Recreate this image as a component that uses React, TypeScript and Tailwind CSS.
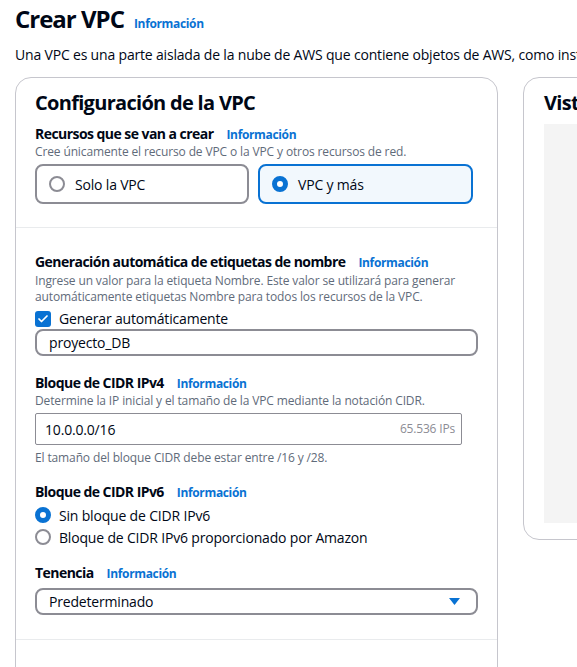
import { Check } from "lucide-react";

const Info = ({ className = "" }: { className?: string }) => (
    <span className={`text-[12px] font-bold tracking-[-0.35px] text-[#0972d3] ${className}`}>Información</span>
);

const Radio = ({ checked }: { checked?: boolean }) =>
    checked ? (
        <span className="w-[16px] h-[16px] rounded-full border-[5px] border-[#0972d3] bg-white shrink-0" />
    ) : (
        <span className="w-[16px] h-[16px] rounded-full border-2 border-[#8c8c94] bg-white shrink-0" />
    );

const Label = ({ children }: { children: React.ReactNode }) => (
    <div className="flex items-baseline gap-[13px] text-[14px] font-bold tracking-[-0.55px] text-[#000716] leading-[18px]">
        <span>{children}</span>
        <Info />
    </div>
);

const Desc = ({ children, className = "" }: { children: React.ReactNode; className?: string }) => (
    <p className={`text-[12px] text-[#5f6b7a] leading-[16px] tracking-[-0.13px] ${className}`}>{children}</p>
);

export default function App() {
    return (
        <div
            className="w-[577px] h-[667px] overflow-hidden bg-white text-[#000716] tracking-[-0.18px]"
            style={{ fontFamily: '"Open Sans", "Noto Sans", sans-serif' }}
        >
            <div className="pl-[15px] pt-[2px]">
                <div className="flex items-baseline gap-[10px]">
                    <h1 className="text-[24px] font-bold tracking-[-1px] leading-[34px]">Crear VPC</h1>
                    <Info />
                </div>
                <p className="mt-[9px] text-[14px] leading-[20px] whitespace-nowrap">
                    Una VPC es una parte aislada de la nube de AWS que contiene objetos de AWS, como instancias de Amazon EC2.
                </p>

                <div className="mt-[12px] flex gap-[25px] items-start">
                    <div className="w-[483px] shrink-0 border border-[#c6c6cd] rounded-[16px]">
                        <div className="px-[19px] pt-[12px] pb-[23px]">
                            <h2 className="text-[20px] font-bold tracking-[-0.7px] leading-[26px]">Configuración de la VPC</h2>
                            <div className="mt-[9px]">
                                <Label>Recursos que se van a crear</Label>
                                <Desc>Cree únicamente el recurso de VPC o la VPC y otros recursos de red.</Desc>
                            </div>
                            <div className="mt-[4px] flex gap-[9px]">
                                <div className="w-[214px] h-[40px] flex items-center gap-[10px] px-[12px] border-2 border-[#8c8c94] rounded-[8px]">
                                    <Radio />
                                    <span className="text-[14px]">Solo la VPC</span>
                                </div>
                                <div className="w-[215px] h-[40px] flex items-center gap-[10px] px-[12px] border-2 border-[#0972d3] bg-[#f2f8fd] rounded-[8px]">
                                    <Radio checked />
                                    <span className="text-[14px]">VPC y más</span>
                                </div>
                            </div>
                        </div>

                        <div className="border-t border-[#e9ebed] px-[19px] pt-[25px] pb-[24px]">
                            <Label>Generación automática de etiquetas de nombre</Label>
                            <Desc className="mt-[1px] w-[430px]">
                                Ingrese un valor para la etiqueta Nombre. Este valor se utilizará para generar automáticamente etiquetas Nombre para todos los recursos de la VPC.
                            </Desc>
                            <div className="mt-[4px] flex items-center gap-[8px] h-[20px]">
                                <span className="w-[16px] h-[16px] rounded-[3px] bg-[#0972d3] flex items-center justify-center">
                                    <Check className="w-[12px] h-[12px] text-white" strokeWidth={3.5} />
                                </span>
                                <span className="text-[14px] leading-[20px]">Generar automáticamente</span>
                            </div>
                            <div className="w-[443px] h-[27px] border-2 border-[#8c8c94] rounded-[8px] flex items-center px-[12px] text-[14px]">
                                proyecto_DB
                            </div>

                            <div className="mt-[18px]">
                                <Label>Bloque de CIDR IPv4</Label>
                                <Desc>Determine la IP inicial y el tamaño de la VPC mediante la notación CIDR.</Desc>
                            </div>
                            <div className="mt-[4px] w-[427px] h-[32px] border border-[#8c8c94] rounded-[2px] flex items-center justify-between pl-[9px] pr-[6px]">
                                <span className="text-[14px]">10.0.0.0/16</span>
                                <span className="text-[12px] text-[#8c8c94]">65.536 IPs</span>
                            </div>
                            <Desc className="mt-[5px]">El tamaño del bloque CIDR debe estar entre /16 y /28.</Desc>

                            <div className="mt-[17px]">
                                <Label>Bloque de CIDR IPv6</Label>
                            </div>
                            <div className="mt-[3px] flex flex-col gap-[2px]">
                                <div className="flex items-center gap-[8px] h-[20px]">
                                    <Radio checked />
                                    <span className="text-[14px]">Sin bloque de CIDR IPv6</span>
                                </div>
                                <div className="flex items-center gap-[8px] h-[20px]">
                                    <Radio />
                                    <span className="text-[14px]">Bloque de CIDR IPv6 proporcionado por Amazon</span>
                                </div>
                            </div>

                            <div className="mt-[17px]">
                                <Label>Tenencia</Label>
                            </div>
                            <div className="mt-[5px] w-[443px] h-[27px] border-2 border-[#8c8c94] rounded-[8px] flex items-center justify-between pl-[12px] pr-[16px] text-[14px]">
                                <span>Predeterminado</span>
                                <svg width="11" height="7" viewBox="0 0 11 7">
                                    <path d="M0 0 H11 L5.5 7 Z" fill="#0972d3" />
                                </svg>
                            </div>
                        </div>

                        <div className="border-t border-[#e9ebed] px-[19px] pt-[28px] pb-[20px]">
                            <Label>Etiquetas adicionales de la VPC</Label>
                        </div>
                    </div>

                    <div className="w-[300px] shrink-0 border border-[#c6c6cd] rounded-[16px] px-[20px] pt-[12px] pb-[16px]">
                        <h2 className="text-[20px] font-bold tracking-[-0.7px] leading-[26px] whitespace-nowrap">Vista previa</h2>
                        <div className="mt-[8px] h-[399px] bg-[#f4f4f4]" />
                    </div>
                </div>
            </div>
        </div>
    );
}
